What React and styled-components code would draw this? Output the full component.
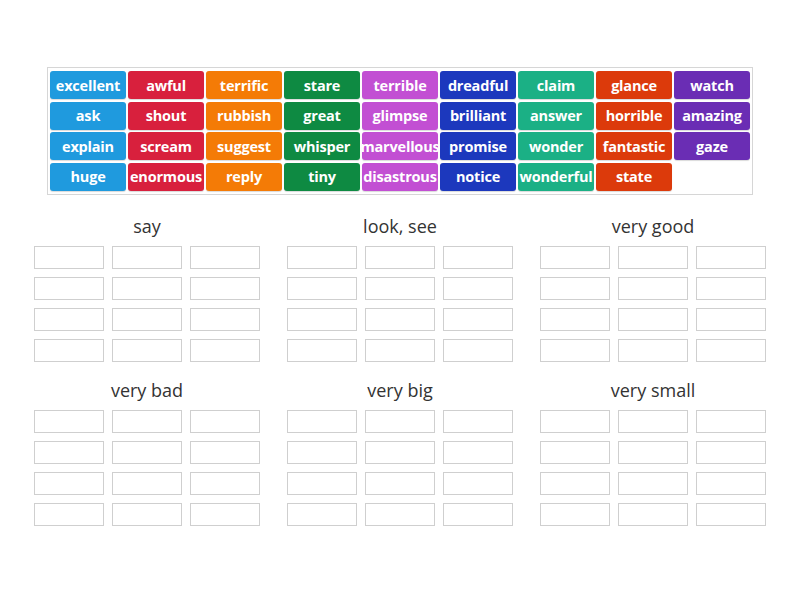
import styled, { createGlobalStyle } from "styled-components"

const GlobalStyle = createGlobalStyle`
  body {
    margin: 0;
    background: #ffffff;
    font-family: "Open Sans", "Liberation Sans", sans-serif;
  }
`

const COLORS = {
  blue: "#1f9ade",
  red: "#d8203d",
  orange: "#f47b06",
  green: "#0e8a42",
  pink: "#c24fd3",
  navy: "#1c38bd",
  teal: "#1bb085",
  rust: "#dc3a0b",
  purple: "#6a2db4",
}

const columns = [
  ["blue", ["excellent", "ask", "explain", "huge"]],
  ["red", ["awful", "shout", "scream", "enormous"]],
  ["orange", ["terrific", "rubbish", "suggest", "reply"]],
  ["green", ["stare", "great", "whisper", "tiny"]],
  ["pink", ["terrible", "glimpse", "marvellous", "disastrous"]],
  ["navy", ["dreadful", "brilliant", "promise", "notice"]],
  ["teal", ["claim", "answer", "wonder", "wonderful"]],
  ["rust", ["glance", "horrible", "fantastic", "state"]],
  ["purple", ["watch", "amazing", "gaze"]],
]

const groups = ["say", "look, see", "very good", "very bad", "very big", "very small"]

const Page = styled.div`
  padding-top: 67px;
  display: flex;
  flex-direction: column;
  align-items: center;
`

const Tray = styled.div`
  width: 700px;
  padding: 3px 2px;
  border: 1px solid #d6d6d6;
  display: grid;
  grid-template-columns: repeat(9, 76px);
  grid-template-rows: repeat(4, 28px);
  grid-auto-flow: column;
  column-gap: 2px;
  row-gap: 2.67px;
`

const Tile = styled.div`
  background: ${p => COLORS[p.$color]};
  color: #ffffff;
  border-radius: 3px;
  display: flex;
  align-items: center;
  justify-content: center;
  font-weight: 700;
  font-size: 14.5px;
  letter-spacing: -0.2px;
  white-space: nowrap;
  overflow: hidden;
  box-shadow: 0 1px 1px rgba(0, 0, 0, 0.15);
`

const Groups = styled.div`
  margin-top: 19px;
  display: grid;
  grid-template-columns: repeat(3, 226px);
  column-gap: 27px;
  row-gap: 16px;
`

const Group = styled.div`
  display: flex;
  flex-direction: column;
`

const Title = styled.div`
  height: 24px;
  line-height: 24px;
  text-align: center;
  font-size: 18px;
  color: #333333;
  margin-bottom: 8px;
`

const Slots = styled.div`
  display: grid;
  grid-template-columns: repeat(3, 70px);
  grid-auto-rows: 23px;
  column-gap: 8px;
  row-gap: 8px;
`

const Slot = styled.div`
  border: 1px solid #cfcfcf;
  box-sizing: border-box;
`

const App = () => {
  return (
    <Page>
      <GlobalStyle />
      <Tray>
        {columns.map(([color, words]) =>
          words.map(w => (
            <Tile key={w} $color={color}>
              {w}
            </Tile>
          ))
        )}
      </Tray>
      <Groups>
        {groups.map(g => (
          <Group key={g}>
            <Title>{g}</Title>
            <Slots>
              {Array.from({ length: 12 }).map((_, i) => (
                <Slot key={i} />
              ))}
            </Slots>
          </Group>
        ))}
      </Groups>
    </Page>
  )
}

export default App
